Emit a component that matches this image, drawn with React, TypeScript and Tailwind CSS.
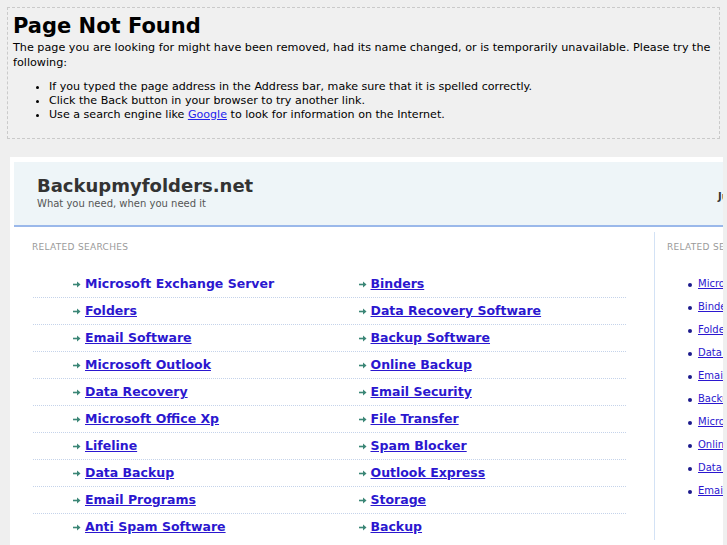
const leftCol = [
  'Microsoft Exchange Server',
  'Folders',
  'Email Software',
  'Microsoft Outlook',
  'Data Recovery',
  'Microsoft Office Xp',
  'Lifeline',
  'Data Backup',
  'Email Programs',
  'Anti Spam Software',
]

const rightCol = [
  'Binders',
  'Data Recovery Software',
  'Backup Software',
  'Online Backup',
  'Email Security',
  'File Transfer',
  'Spam Blocker',
  'Outlook Express',
  'Storage',
  'Backup',
]

const sideLinks = [
  'Microsoft Exchange Server',
  'Binders',
  'Folders',
  'Data Recovery Software',
  'Email Software',
  'Backup Software',
  'Microsoft Outlook',
  'Online Backup',
  'Data Recovery',
  'Email Security',
]

const Arrow = () => (
  <svg width="8" height="7" viewBox="0 0 8 7" className="shrink-0 mt-[1px]">
    <path d="M0 3.5 H5" stroke="#3b8676" strokeWidth="1.6" />
    <path d="M4 0.5 L7.5 3.5 L4 6.5 Z" fill="#3b8676" />
  </svg>
)

const LinkRow = ({ text, first, pad }: { text: string; first?: boolean; pad: string }) => (
  <div className={`flex items-center h-[26px] ${pad}`}>
    <Arrow />
    <a
      href="#"
      className={`ml-[4px] text-[12.5px] font-bold text-[#2b17cf] leading-none ${first ? 'no-underline' : 'underline'}`}
    >
      {text}
    </a>
  </div>
)

export default function App() {
  return (
    <div className="w-[727px] h-[545px] overflow-hidden bg-[#efefef] font-['DejaVu_Sans',sans-serif]">
      {/* Error notice */}
      <div className="mx-[7px] mt-[7px] h-[132px] border border-dashed border-[#cacaca] bg-[#f0f0f0] pl-[5px] pt-[4px] text-black">
        <h1 className="text-[21px] font-bold leading-[28px]">Page Not Found</h1>
        <p className="text-[11.2px] leading-[15px]">
          The page you are looking for might have been removed, had its name changed, or is temporarily unavailable. Please try the following:
        </p>
        <ul className="mt-[10px] list-disc pl-[36px] text-[11.1px] leading-[14px]">
          <li>If you typed the page address in the Address bar, make sure that it is spelled correctly.</li>
          <li>Click the Back button in your browser to try another link.</li>
          <li>
            Use a search engine like{' '}
            <a href="#" className="text-[#2222ee] underline">
              Google
            </a>{' '}
            to look for information on the Internet.
          </li>
        </ul>
      </div>

      {/* Parked page panel */}
      <div className="ml-[10px] mt-[18px] w-[713px] h-[400px] overflow-hidden bg-white pl-[4px] pt-[5px]">
        <div className="flex h-[65px] w-[900px] border-b-2 border-[#9ab8ea] bg-[#eef5f8]">
          <div className="w-[704px] shrink-0 pl-[23px] pt-[13px]">
            <div className="text-[18px] font-bold leading-[22px] text-[#333]">Backupmyfolders.net</div>
            <div className="text-[10px] leading-[13px] text-[#555]">What you need, when you need it</div>
          </div>
          <div className="pt-[27px] text-[10px] font-bold text-[#333]">June 2013</div>
        </div>

        <div className="mt-[5px] flex w-[900px]">
          {/* Main column */}
          <div className="w-[641px] shrink-0 border-r border-[#d3e2f5] pl-[18px] pt-[9px]">
            <div className="text-[9px] leading-[12px] tracking-[0.3px] text-[#9a9a9a]">RELATED SEARCHES</div>
            <div className="mt-[18px] w-[594px] pl-[1px]">
              {leftCol.map((l, i) => (
                <div
                  key={l}
                  className={`grid grid-cols-2 ${i < leftCol.length - 1 ? 'border-b border-dotted border-[#c5d3ea]' : ''}`}
                >
                  <LinkRow text={l} first={i === 0} pad="pl-[40px]" />
                  <LinkRow text={rightCol[i]} pad="pl-[29px]" />
                </div>
              ))}
            </div>
          </div>

          {/* Side column */}
          <div className="pl-[12px] pt-[9px]">
            <div className="text-[9px] leading-[12px] tracking-[0.3px] text-[#9a9a9a]">RELATED SEARCHES</div>
            <ul className="mt-[19px] pl-[21px]">
              {sideLinks.map((l) => (
                <li key={l} className="flex h-[23px] items-center">
                  <span className="mt-[2px] h-[4px] w-[4px] rounded-full bg-[#1c1a8c]" />
                  <a href="#" className="ml-[6px] text-[10px] text-[#2b17cf] underline">
                    {l}
                  </a>
                </li>
              ))}
            </ul>
          </div>
        </div>
      </div>
    </div>
  )
}
